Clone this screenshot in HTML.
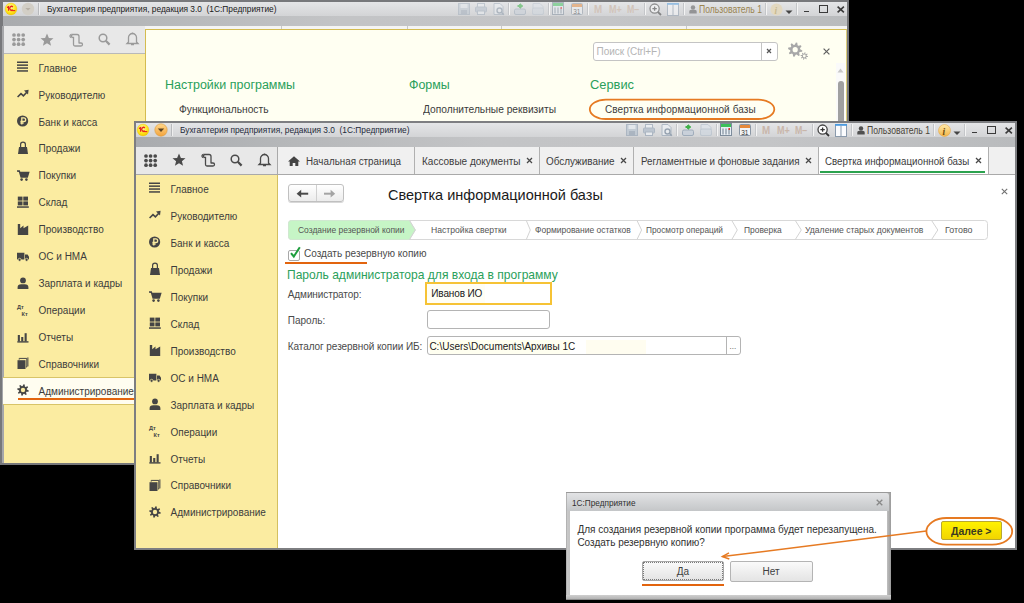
<!DOCTYPE html><html><head><meta charset="utf-8"><title>1C</title><style>*{margin:0;padding:0;box-sizing:border-box}
html,body{width:1024px;height:603px;overflow:hidden;background:#000}
body{position:relative;font-family:"Liberation Sans",sans-serif}
.a{position:absolute}
.t{white-space:nowrap}
svg.a{overflow:visible}</style></head><body><svg width="0" height="0" style="position:absolute"><defs>
<radialGradient id="g1c" cx="0.45" cy="0.35" r="0.7"><stop offset="0" stop-color="#fffbb0"/><stop offset="0.6" stop-color="#ffe61a"/><stop offset="1" stop-color="#f2c200"/></radialGradient>
<linearGradient id="gdd" x1="0" y1="0" x2="0" y2="1"><stop offset="0" stop-color="#ffd68a"/><stop offset="1" stop-color="#f4a43c"/></linearGradient>
<linearGradient id="ginfo" x1="0" y1="0" x2="0" y2="1"><stop offset="0" stop-color="#ffe9a8"/><stop offset="1" stop-color="#f3b548"/></linearGradient>
</defs></svg>
<div class="a" style="left:0px;top:0px;width:849px;height:465px;background:#77787b;"></div>
<div class="a" style="left:3px;top:2px;width:844px;height:13.5px;background:linear-gradient(#e4e5e7,#d3d4d6);"></div>
<div class="a" style="left:3px;top:15.5px;width:844px;height:10.2px;background:linear-gradient(90deg,#a9abae 0%,#b6b8ba 18%,#c3c4c6 40%,#c4c5c7 72%,#b9bbbd 100%);"></div>
<svg class="a" style="left:3.8000000000000007px;top:2px;" width="14" height="14" viewBox="0 0 14 14"><circle cx="7" cy="7" r="5.9" fill="url(#g1c)" stroke="#eec800" stroke-width="0.4"/><path d="M3 5.6l1.6-1v4.2" fill="none" stroke="#e8261c" stroke-width="1.3"/><path d="M8.9 4.9a1.9 1.9 0 1 0 0 2.8" fill="none" stroke="#e8261c" stroke-width="1.3"/><path d="M6.6 8.6h4.6" stroke="#e8261c" stroke-width="1.1"/></svg>
<svg class="a" style="left:21.1px;top:2px;" width="14" height="14" viewBox="0 0 14 14"><circle cx="7" cy="7" r="6.2" fill="#d3cfc6"/><path d="M4.3 6h5.4l-2.7 2.6z" fill="#b7b1a6"/></svg>
<div class="a" style="left:38.3px;top:3px;width:2px;height:11.5px;border-left:1px solid #b8babd;border-right:1px solid #eeeeee;"></div>
<div class="a t" style="left:47.099999999999994px;top:3.93px;font-size:9.5px;line-height:9.5px;color:#202020;transform:scaleX(0.8775);transform-origin:0 0;">Бухгалтерия предприятия, редакция 3.0&nbsp; (1С:Предприятие)</div>
<svg class="a" style="left:458px;top:3px;opacity:0.45" width="12" height="12" viewBox="0 0 12 12"><rect x="0.5" y="0.5" width="11" height="11" fill="#b8c4d0" stroke="#9aa8b8"/><rect x="2.5" y="1" width="7" height="4" fill="#e4eaf0"/><rect x="3" y="7" width="6" height="4.5" fill="#98a6b6"/></svg>
<svg class="a" style="left:475px;top:3px;opacity:0.45" width="12" height="12" viewBox="0 0 12 12"><rect x="2.5" y="0.5" width="7" height="4" fill="#eef2f6" stroke="#9aa8b8"/><rect x="0.5" y="4" width="11" height="5" rx="1" fill="#b0bccb" stroke="#9aa8b8"/><rect x="2.5" y="8" width="7" height="3.5" fill="#eef2f6" stroke="#9aa8b8"/></svg>
<svg class="a" style="left:493px;top:3px;opacity:0.45" width="12" height="12" viewBox="0 0 12 12"><path d="M1 0.5h6l3 3V11.5H1z" fill="#eef2f6" stroke="#9aa8b8"/><circle cx="6.5" cy="7.5" r="2.5" fill="none" stroke="#7d8ea0" stroke-width="1.4"/><path d="M8.3 9.3l2.5 2.5" stroke="#7d8ea0" stroke-width="1.6"/></svg>
<div class="a" style="left:508px;top:3px;width:2px;height:12px;border-left:1px solid #c4c6c9;border-right:1px solid #f4f4f4;"></div>
<svg class="a" style="left:514px;top:3px;opacity:0.5" width="12" height="12" viewBox="0 0 12 12"><rect x="0.5" y="6" width="11" height="5.5" rx="1.5" fill="#c8d0da" stroke="#9aa8b8"/><path d="M6 1v4M3.5 3h5" stroke="#2fae3a" stroke-width="1.8"/><path d="M6 0l3 3-3 3z" fill="#2fae3a"/></svg>
<svg class="a" style="left:532px;top:3px;opacity:0.45" width="12" height="12" viewBox="0 0 12 12"><path d="M1 0.5h7l3 3V11.5H1z" fill="#dde3ea" stroke="#b6c1cd"/><rect x="0.5" y="5" width="11" height="6.5" rx="1.5" fill="#cfd7e0" stroke="#b6c1cd"/></svg>
<div class="a" style="left:547.5px;top:3px;width:2px;height:12px;border-left:1px solid #c4c6c9;border-right:1px solid #f4f4f4;"></div>
<svg class="a" style="left:552px;top:2px;opacity:0.5;" width="12" height="13" viewBox="0 0 12 13"><rect x="0.5" y="0.5" width="11" height="12" fill="#e8eef4" stroke="#7d8c9c"/><rect x="1" y="1" width="10" height="3" fill="#3cc05a"/><path d="M3 5.5v6M6 5.5v6M9 5.5v6" stroke="#6d7c8c" stroke-width="1"/><rect x="8.5" y="5" width="1.5" height="2" fill="#e03030"/></svg>
<svg class="a" style="left:571px;top:2px;opacity:0.5;" width="12" height="13" viewBox="0 0 12 13"><rect x="0.5" y="1.5" width="11" height="11" rx="1" fill="#f2f4f6" stroke="#8a96a4"/><rect x="1" y="2" width="10" height="3" fill="#e6893a"/><text x="2.2" y="11.5" font-size="6.5" font-family="Liberation Sans" fill="#333">31</text></svg>
<div class="a" style="left:587px;top:3px;width:2px;height:12px;border-left:1px solid #c4c6c9;border-right:1px solid #f4f4f4;"></div>
<div class="a t" style="left:593.8px;top:5.00px;font-size:10px;line-height:10px;color:#d2c4ba;font-weight:bold;transform:scaleX(0.9828);transform-origin:0 0;">M</div>
<div class="a t" style="left:609.3px;top:5.00px;font-size:10px;line-height:10px;color:#d2c4ba;font-weight:bold;transform:scaleX(0.9032);transform-origin:0 0;">M+</div>
<div class="a t" style="left:626.8px;top:5.00px;font-size:10px;line-height:10px;color:#d2c4ba;font-weight:bold;transform:scaleX(0.8820);transform-origin:0 0;">M−</div>
<div class="a" style="left:644px;top:3px;width:2px;height:12px;border-left:1px solid #c4c6c9;border-right:1px solid #f4f4f4;"></div>
<svg class="a" style="left:649px;top:2.5px;opacity:0.5;" width="13" height="13" viewBox="0 0 13 13"><circle cx="5.6" cy="5.6" r="4.6" fill="#fff" stroke="#444" stroke-width="1.3"/><path d="M3.4 5.6h4.4M5.6 3.4v4.4" stroke="#333" stroke-width="1.3"/><path d="M8.8 8.8l3.2 3.2" stroke="#333" stroke-width="1.8"/></svg>
<svg class="a" style="left:667px;top:2.5px;opacity:0.5;" width="12" height="13" viewBox="0 0 12 13"><rect x="0.5" y="0.5" width="11" height="12" fill="#fbfcfe" stroke="#8a9aac"/><rect x="0" y="0" width="12" height="1.8" fill="#4a9ae0"/><path d="M6 1.5v11" stroke="#8a9aac"/></svg>
<div class="a" style="left:682.5px;top:3px;width:2px;height:12px;border-left:1px solid #c4c6c9;border-right:1px solid #f4f4f4;"></div>
<svg class="a" style="left:689px;top:4.5px;opacity:0.5;" width="8" height="9" viewBox="0 0 8 9"><circle cx="4" cy="2.5" r="2.2" fill="#505050"/><path d="M0.3 8.5v-1.5a2.5 2 0 0 1 2.5-2.2h2.4a2.5 2 0 0 1 2.5 2.2v1.5z" fill="#505050"/></svg>
<div class="a t" style="left:698.6px;top:4.60px;font-size:10px;line-height:10px;color:#9a8450;transform:scaleX(0.8603);transform-origin:0 0;">Пользователь 1</div>
<div class="a" style="left:765px;top:3px;width:2px;height:12px;border-left:1px solid #c4c6c9;border-right:1px solid #f4f4f4;"></div>
<svg class="a" style="left:769.5px;top:2.5px;" width="13" height="13" viewBox="0 0 13 13"><circle cx="6.5" cy="6.5" r="6" fill="#e2d8c0"/><text x="4.6" y="10.8" font-size="9.5" font-weight="bold" font-style="italic" font-family="Liberation Serif" fill="#c8b890">i</text></svg>
<svg class="a" style="left:785px;top:10px;" width="8" height="5" viewBox="0 0 8 5"><path d="M0.5 0.5h7l-3.5 3.5z" fill="#444"/></svg>
<div class="a" style="left:796px;top:3px;width:2px;height:12px;border-left:1px solid #c4c6c9;border-right:1px solid #f4f4f4;"></div>
<div class="a" style="left:803.5px;top:10.8px;width:5.5px;height:1.7px;background:#3a3a3a;"></div>
<div class="a" style="left:819px;top:5.4px;width:9px;height:8px;border:1px solid #3a3a3a;border-top-width:1.6px;"></div>
<svg class="a" style="left:836.5px;top:6px;" width="7.5" height="7" viewBox="0 0 7.5 7"><path d="M0.6 0.6l6.3 5.8M6.9 0.6L0.6 6.4" stroke="#3a3a3a" stroke-width="1.6"/></svg>
<div class="a" style="left:3px;top:25.7px;width:142px;height:28.3px;background:#e8e8e8;border-bottom:1px solid #b9b9b9;"></div>
<div class="a" style="left:145px;top:25.7px;width:702px;height:4px;background:#f4f4f4;"></div>
<div class="a" style="left:281px;top:25.7px;width:1px;height:4px;background:#c8c8c8;"></div>
<div class="a" style="left:406.5px;top:25.7px;width:1px;height:4px;background:#c8c8c8;"></div>
<div class="a" style="left:500.5px;top:25.7px;width:1px;height:4px;background:#c8c8c8;"></div>
<div class="a" style="left:685.5px;top:25.7px;width:1px;height:4px;background:#c8c8c8;"></div>
<div class="a" style="left:3px;top:54px;width:142px;height:409px;background:#fbeca1;"></div>
<div class="a" style="left:2px;top:26px;width:1.5px;height:437px;background:#a6a7aa;"></div>
<div class="a" style="left:145px;top:29.4px;width:702px;height:434px;background:#fffff2;border-left:1px solid #d4bc50;border-top:1px solid #d4bc50;border-right:1px solid #dccc78;"></div>
<svg class="a" style="left:11.5px;top:33.2px;" width="14" height="14" viewBox="0 0 14 14"><circle cx="2.0" cy="2.0" r="1.85" fill="#9a9a9a"/><circle cx="2.0" cy="6.6" r="1.85" fill="#9a9a9a"/><circle cx="2.0" cy="11.2" r="1.85" fill="#9a9a9a"/><circle cx="6.6" cy="2.0" r="1.85" fill="#9a9a9a"/><circle cx="6.6" cy="6.6" r="1.85" fill="#9a9a9a"/><circle cx="6.6" cy="11.2" r="1.85" fill="#9a9a9a"/><circle cx="11.2" cy="2.0" r="1.85" fill="#9a9a9a"/><circle cx="11.2" cy="6.6" r="1.85" fill="#9a9a9a"/><circle cx="11.2" cy="11.2" r="1.85" fill="#9a9a9a"/></svg>
<svg class="a" style="left:40px;top:32.7px;" width="14" height="14" viewBox="0 0 14 14"><path d="M7 0.5l1.9 4.4 4.6 0.3-3.6 3 1.2 4.6L7 10.3l-4.1 2.5 1.2-4.6-3.6-3 4.6-0.3z" fill="#9a9a9a"/></svg>
<svg class="a" style="left:68.5px;top:32.7px;" width="14" height="14" viewBox="0 0 14 14"><path d="M2.5 1.5h5.5a2 2 0 0 1 2 2V10.5M4 1.5a1.5 1.5 0 0 0 0 3h0.5v7a1.5 1.5 0 0 0 1.5 1.5h6a1.5 1.5 0 0 0 0-3h-2" fill="none" stroke="#9a9a9a" stroke-width="1.3"/><path d="M2.5 1.5a1.5 1.5 0 0 0 0 3" fill="none" stroke="#9a9a9a" stroke-width="1.3"/></svg>
<svg class="a" style="left:97.5px;top:33.2px;" width="13" height="13" viewBox="0 0 13 13"><circle cx="5" cy="5" r="3.8" fill="none" stroke="#9a9a9a" stroke-width="1.5"/><path d="M7.8 7.8l3.8 3.8" stroke="#9a9a9a" stroke-width="2.2"/></svg>
<svg class="a" style="left:125.5px;top:32.2px;" width="13" height="14" viewBox="0 0 13 14"><path d="M6.5 1.5a4 4 0 0 0-4 4V10L1 11.5h11L10.5 10V5.5a4 4 0 0 0-4-4z" fill="none" stroke="#9a9a9a" stroke-width="1.3"/><circle cx="6.5" cy="1.3" r="0.9" fill="#9a9a9a"/><path d="M5 12.5h3" stroke="#9a9a9a" stroke-width="1.5"/></svg>
<div class="a" style="left:3px;top:377.3px;width:142px;height:28px;background:#fffdf0;border-top:1px solid #d8c468;border-bottom:1px solid #d8c468;"></div>
<svg class="a" style="left:16.599999999999994px;top:60.99999999999999px;" width="12" height="12" viewBox="0 0 12 12"><rect x="0" y="0.5" width="11" height="1.5" fill="#454545"/><rect x="0" y="3.4" width="11" height="1.5" fill="#454545"/><rect x="0" y="6.3" width="11" height="1.5" fill="#454545"/><rect x="0" y="9.2" width="11" height="1.5" fill="#454545"/></svg>
<div class="a t" style="left:38.5px;top:63.60px;font-size:10px;line-height:10px;color:#3c3c3c;">Главное</div>
<svg class="a" style="left:16.599999999999994px;top:87.94999999999999px;" width="12" height="12" viewBox="0 0 12 12"><polyline points="0.6,9 4,5.6 6.4,7.8 9.8,4.2" fill="none" stroke="#454545" stroke-width="1.6"/><polygon points="7,2.6 11.6,1.8 11,6.4" fill="#454545"/></svg>
<div class="a t" style="left:38.5px;top:90.55px;font-size:10px;line-height:10px;color:#3c3c3c;">Руководителю</div>
<svg class="a" style="left:16.599999999999994px;top:114.9px;" width="12" height="12" viewBox="0 0 12 12"><circle cx="5.6" cy="6" r="5.6" fill="#454545"/><path d="M4.8 9.6V2.8h2a1.8 1.8 0 0 1 0 3.7H3.4M3.4 8.2H6.6" fill="none" stroke="#fbeca1" stroke-width="1.3"/></svg>
<div class="a t" style="left:38.5px;top:117.50px;font-size:10px;line-height:10px;color:#3c3c3c;">Банк и касса</div>
<svg class="a" style="left:16.599999999999994px;top:141.85000000000002px;" width="12" height="12" viewBox="0 0 12 12"><path d="M2 5h8l1 7H1z" fill="#454545"/><path d="M3.6 6V2.4a2.4 2.2 0 0 1 4.8 0V6" fill="none" stroke="#454545" stroke-width="1.2"/></svg>
<div class="a t" style="left:38.5px;top:144.45px;font-size:10px;line-height:10px;color:#3c3c3c;">Продажи</div>
<svg class="a" style="left:16.599999999999994px;top:168.8px;" width="12" height="12" viewBox="0 0 12 12"><path d="M0 2h2.3l1.8 6h6.2l1.4-4.5H3" fill="#454545" stroke="#454545" stroke-width="1.4"/><circle cx="4.6" cy="10.6" r="1.3" fill="#454545"/><circle cx="9.4" cy="10.6" r="1.3" fill="#454545"/></svg>
<div class="a t" style="left:38.5px;top:171.40px;font-size:10px;line-height:10px;color:#3c3c3c;">Покупки</div>
<svg class="a" style="left:16.599999999999994px;top:195.75px;" width="12" height="12" viewBox="0 0 12 12"><rect x="0.8" y="0.6" width="4.7" height="4" fill="#454545"/><rect x="6.3" y="0.6" width="4.7" height="4" fill="#454545"/><rect x="0.8" y="5.4" width="4.7" height="4" fill="#454545"/><rect x="6.3" y="5.4" width="4.7" height="4" fill="#454545"/><rect x="0" y="10.3" width="11.8" height="1.5" fill="#454545"/></svg>
<div class="a t" style="left:38.5px;top:198.35px;font-size:10px;line-height:10px;color:#3c3c3c;">Склад</div>
<svg class="a" style="left:16.599999999999994px;top:222.7px;" width="12" height="12" viewBox="0 0 12 12"><path d="M0.8 12V1h2.4v4.2l3.3-2.6v2.6l4.7-2.6V12z" fill="#454545"/></svg>
<div class="a t" style="left:38.5px;top:225.30px;font-size:10px;line-height:10px;color:#3c3c3c;">Производство</div>
<svg class="a" style="left:16.599999999999994px;top:249.65px;" width="12" height="12" viewBox="0 0 12 12"><path d="M0 2.8h7.4v6.6H0zM8 4.6h2.6l1.4 2.2v2.6H8z" fill="#454545"/><circle cx="2.6" cy="9.8" r="1.5" fill="#454545" stroke="#fbeca1" stroke-width="0.7"/><circle cx="9.6" cy="9.8" r="1.5" fill="#454545" stroke="#fbeca1" stroke-width="0.7"/></svg>
<div class="a t" style="left:38.5px;top:252.25px;font-size:10px;line-height:10px;color:#3c3c3c;">ОС и НМА</div>
<svg class="a" style="left:16.599999999999994px;top:276.6px;" width="12" height="12" viewBox="0 0 12 12"><circle cx="6" cy="3.4" r="2.9" fill="#454545"/><path d="M0.6 12v-1.8a3.6 3 0 0 1 3.6-3h3.6a3.6 3 0 0 1 3.6 3V12z" fill="#454545"/></svg>
<div class="a t" style="left:38.5px;top:279.20px;font-size:10px;line-height:10px;color:#3c3c3c;">Зарплата и кадры</div>
<svg class="a" style="left:16.599999999999994px;top:303.54999999999995px;" width="12" height="12" viewBox="0 0 12 12"><text x="0" y="5" font-size="5.6" font-family="Liberation Sans" font-weight="bold" fill="#454545">Дт</text><text x="4.6" y="11.6" font-size="5.6" font-family="Liberation Sans" font-weight="bold" fill="#454545">Кт</text></svg>
<div class="a t" style="left:38.5px;top:306.15px;font-size:10px;line-height:10px;color:#3c3c3c;">Операции</div>
<svg class="a" style="left:16.599999999999994px;top:330.5px;" width="12" height="12" viewBox="0 0 12 12"><rect x="0.3" y="10.2" width="11.2" height="1.4" fill="#454545"/><rect x="0.8" y="4" width="2.1" height="6.5" fill="#454545"/><rect x="4.2" y="6" width="2.1" height="4.5" fill="#454545"/><rect x="7.6" y="2.2" width="2.1" height="8.3" fill="#454545"/></svg>
<div class="a t" style="left:38.5px;top:333.10px;font-size:10px;line-height:10px;color:#3c3c3c;">Отчеты</div>
<svg class="a" style="left:16.599999999999994px;top:357.44999999999993px;" width="12" height="12" viewBox="0 0 12 12"><rect x="0.5" y="3.2" width="8" height="8.8" fill="#454545"/><path d="M2.2 2.6V1.4h7.6v8.6H8.9M10.9 0.4v9" fill="none" stroke="#454545" stroke-width="1"/></svg>
<div class="a t" style="left:38.5px;top:360.05px;font-size:10px;line-height:10px;color:#3c3c3c;">Справочники</div>
<svg class="a" style="left:16.599999999999994px;top:384.4px;" width="12" height="12" viewBox="0 0 12 12"><polygon points="11.77,6.57 11.55,7.68 9.48,7.86 9.05,8.50 9.68,10.48 8.73,11.12 7.14,9.77 6.39,9.93 5.43,11.77 4.32,11.55 4.14,9.48 3.50,9.05 1.52,9.68 0.88,8.73 2.23,7.14 2.07,6.39 0.23,5.43 0.45,4.32 2.52,4.14 2.95,3.50 2.32,1.52 3.27,0.88 4.86,2.23 5.61,2.07 6.57,0.23 7.68,0.45 7.86,2.52 8.50,2.95 10.48,2.32 11.12,3.27 9.77,4.86 9.93,5.61" fill="#454545"/><circle cx="6" cy="6" r="2.2" fill="#fbeca1"/></svg>
<div class="a t" style="left:38.5px;top:387.00px;font-size:10px;line-height:10px;color:#3c3c3c;">Администрирование</div>
<div class="a" style="left:17.7px;top:397.5px;width:116px;height:2.2px;background:#e2640e;"></div>
<div class="a t" style="left:165px;top:79.38px;font-size:12.5px;line-height:12.5px;color:#2aa05a;transform:scaleX(0.9994);transform-origin:0 0;">Настройки программы</div>
<div class="a t" style="left:408.6px;top:79.26px;font-size:12.4px;line-height:12.4px;color:#2aa05a;transform:scaleX(1.0039);transform-origin:0 0;">Формы</div>
<div class="a t" style="left:590px;top:78.92px;font-size:12.8px;line-height:12.8px;color:#2aa05a;transform:scaleX(1.0039);transform-origin:0 0;">Сервис</div>
<div class="a t" style="left:178.6px;top:104.70px;font-size:10px;line-height:10px;color:#3c3c3c;transform:scaleX(1.0241);transform-origin:0 0;">Функциональность</div>
<div class="a t" style="left:422.6px;top:104.70px;font-size:10px;line-height:10px;color:#3c3c3c;transform:scaleX(1.0209);transform-origin:0 0;">Дополнительные реквизиты</div>
<div class="a t" style="left:605px;top:104.70px;font-size:10px;line-height:10px;color:#3c3c3c;letter-spacing:0.09px;">Свертка информационной базы</div>
<svg class="a" style="left:587px;top:97px;" width="190" height="24" viewBox="0 0 190 24"><rect x="2.8" y="2.7" width="184.5" height="19.3" rx="16" ry="9.65" fill="none" stroke="#e67a22" stroke-width="1.8"/></svg>
<div class="a" style="left:593px;top:42px;width:185px;height:19px;background:#fff;border:1px solid #c4c4c4;border-radius:3px;"></div>
<div class="a" style="left:761px;top:43px;width:1px;height:17px;background:#c4c4c4;"></div>
<div class="a t" style="left:596.5px;top:47.30px;font-size:10px;line-height:10px;color:#b4b4b4;letter-spacing:-0.05px;">Поиск (Ctrl+F)</div>
<svg class="a" style="left:766px;top:48px;" width="6" height="6" viewBox="0 0 6 6"><path d="M1 1l4 4M5 1l-4 4" stroke="#555" stroke-width="1.2"/></svg>
<svg class="a" style="left:786px;top:41px;" width="24" height="20" viewBox="0 0 24 20"><polygon points="16.37,9.41 16.09,10.79 13.64,11.08 13.10,11.90 13.77,14.27 12.59,15.05 10.66,13.52 9.69,13.72 8.49,15.87 7.11,15.59 6.82,13.14 6.00,12.60 3.63,13.27 2.85,12.09 4.38,10.16 4.18,9.19 2.03,7.99 2.31,6.61 4.76,6.32 5.30,5.50 4.63,3.13 5.81,2.35 7.74,3.88 8.71,3.68 9.91,1.53 11.29,1.81 11.58,4.26 12.40,4.80 14.77,4.13 15.55,5.31 14.02,7.24 14.22,8.21" fill="#a8a8a8"/><circle cx="9.2" cy="8.7" r="2.6" fill="#fffff2"/><polygon points="22.08,15.37 21.94,16.10 20.38,16.11 20.12,16.49 20.71,17.94 20.09,18.35 18.98,17.25 18.53,17.34 17.93,18.78 17.20,18.64 17.19,17.08 16.81,16.82 15.36,17.41 14.95,16.79 16.05,15.68 15.96,15.23 14.52,14.63 14.66,13.90 16.22,13.89 16.48,13.51 15.89,12.06 16.51,11.65 17.62,12.75 18.07,12.66 18.67,11.22 19.40,11.36 19.41,12.92 19.79,13.18 21.24,12.59 21.65,13.21 20.55,14.32 20.64,14.77" fill="#a8a8a8"/><circle cx="18.3" cy="15" r="1.4" fill="#fffff2"/></svg>
<svg class="a" style="left:822.5px;top:48px;" width="7" height="7" viewBox="0 0 7 7"><path d="M0.6 0.6l5.8 5.8M6.4 0.6l-5.8 5.8" stroke="#606060" stroke-width="1.2"/></svg>
<div class="a" style="left:836px;top:63px;width:9px;height:400px;background:#fafafa;"></div>
<svg class="a" style="left:837px;top:68px;" width="7" height="5" viewBox="0 0 7 5"><path d="M0.5 4.5l3-4 3 4z" fill="#c8c8c8"/></svg>
<div class="a" style="left:838.4px;top:81px;width:5.6px;height:400px;background:#a0a0a0;border-radius:3px 3px 0 0;"></div>
<div class="a" style="left:134px;top:121px;width:883px;height:429px;background:#7d7e81;"></div>
<div class="a" style="left:136px;top:123px;width:879px;height:13.5px;background:linear-gradient(#e4e5e7,#d3d4d6);"></div>
<div class="a" style="left:136px;top:136.5px;width:879px;height:10.2px;background:linear-gradient(90deg,#a9abae 0%,#b6b8ba 18%,#c3c4c6 40%,#c4c5c7 72%,#b9bbbd 100%);"></div>
<svg class="a" style="left:136.3px;top:123px;" width="14" height="14" viewBox="0 0 14 14"><circle cx="7" cy="7" r="5.9" fill="url(#g1c)" stroke="#eec800" stroke-width="0.4"/><path d="M3 5.6l1.6-1v4.2" fill="none" stroke="#e8261c" stroke-width="1.3"/><path d="M8.9 4.9a1.9 1.9 0 1 0 0 2.8" fill="none" stroke="#e8261c" stroke-width="1.3"/><path d="M6.6 8.6h4.6" stroke="#e8261c" stroke-width="1.1"/></svg>
<svg class="a" style="left:153.60000000000002px;top:123px;" width="14" height="14" viewBox="0 0 14 14"><circle cx="7" cy="7" r="6.2" fill="url(#gdd)" stroke="#d99a40" stroke-width="0.6"/><path d="M3.8 5.6h6.4l-3.2 3.4z" fill="#5c4424"/></svg>
<div class="a" style="left:170.8px;top:124px;width:2px;height:11.5px;border-left:1px solid #b8babd;border-right:1px solid #eeeeee;"></div>
<div class="a t" style="left:179.60000000000002px;top:124.92px;font-size:9.5px;line-height:9.5px;color:#1e2a3a;transform:scaleX(0.8775);transform-origin:0 0;">Бухгалтерия предприятия, редакция 3.0&nbsp; (1С:Предприятие)</div>
<svg class="a" style="left:626px;top:124px;opacity:0.7" width="12" height="12" viewBox="0 0 12 12"><rect x="0.5" y="0.5" width="11" height="11" fill="#b8c4d0" stroke="#9aa8b8"/><rect x="2.5" y="1" width="7" height="4" fill="#e4eaf0"/><rect x="3" y="7" width="6" height="4.5" fill="#98a6b6"/></svg>
<svg class="a" style="left:643px;top:124px;opacity:0.7" width="12" height="12" viewBox="0 0 12 12"><rect x="2.5" y="0.5" width="7" height="4" fill="#eef2f6" stroke="#9aa8b8"/><rect x="0.5" y="4" width="11" height="5" rx="1" fill="#b0bccb" stroke="#9aa8b8"/><rect x="2.5" y="8" width="7" height="3.5" fill="#eef2f6" stroke="#9aa8b8"/></svg>
<svg class="a" style="left:661px;top:124px;opacity:0.7" width="12" height="12" viewBox="0 0 12 12"><path d="M1 0.5h6l3 3V11.5H1z" fill="#eef2f6" stroke="#9aa8b8"/><circle cx="6.5" cy="7.5" r="2.5" fill="none" stroke="#7d8ea0" stroke-width="1.4"/><path d="M8.3 9.3l2.5 2.5" stroke="#7d8ea0" stroke-width="1.6"/></svg>
<div class="a" style="left:676px;top:124px;width:2px;height:12px;border-left:1px solid #c4c6c9;border-right:1px solid #f4f4f4;"></div>
<svg class="a" style="left:682px;top:124px;opacity:0.9" width="12" height="12" viewBox="0 0 12 12"><rect x="0.5" y="6" width="11" height="5.5" rx="1.5" fill="#c8d0da" stroke="#9aa8b8"/><path d="M6 1v4M3.5 3h5" stroke="#2fae3a" stroke-width="1.8"/><path d="M6 0l3 3-3 3z" fill="#2fae3a"/></svg>
<svg class="a" style="left:700px;top:124px;opacity:0.7" width="12" height="12" viewBox="0 0 12 12"><path d="M1 0.5h7l3 3V11.5H1z" fill="#dde3ea" stroke="#b6c1cd"/><rect x="0.5" y="5" width="11" height="6.5" rx="1.5" fill="#cfd7e0" stroke="#b6c1cd"/></svg>
<div class="a" style="left:715.5px;top:124px;width:2px;height:12px;border-left:1px solid #c4c6c9;border-right:1px solid #f4f4f4;"></div>
<svg class="a" style="left:720px;top:123px;" width="12" height="13" viewBox="0 0 12 13"><rect x="0.5" y="0.5" width="11" height="12" fill="#e8eef4" stroke="#7d8c9c"/><rect x="1" y="1" width="10" height="3" fill="#3cc05a"/><path d="M3 5.5v6M6 5.5v6M9 5.5v6" stroke="#6d7c8c" stroke-width="1"/><rect x="8.5" y="5" width="1.5" height="2" fill="#e03030"/></svg>
<svg class="a" style="left:739px;top:123px;" width="12" height="13" viewBox="0 0 12 13"><rect x="0.5" y="1.5" width="11" height="11" rx="1" fill="#f2f4f6" stroke="#8a96a4"/><rect x="1" y="2" width="10" height="3" fill="#e6893a"/><text x="2.2" y="11.5" font-size="6.5" font-family="Liberation Sans" fill="#333">31</text></svg>
<div class="a" style="left:755px;top:124px;width:2px;height:12px;border-left:1px solid #c4c6c9;border-right:1px solid #f4f4f4;"></div>
<div class="a t" style="left:761.8px;top:126.00px;font-size:10px;line-height:10px;color:#c9b6aa;font-weight:bold;transform:scaleX(0.9828);transform-origin:0 0;">M</div>
<div class="a t" style="left:777.3px;top:126.00px;font-size:10px;line-height:10px;color:#c9b6aa;font-weight:bold;transform:scaleX(0.9032);transform-origin:0 0;">M+</div>
<div class="a t" style="left:794.8px;top:126.00px;font-size:10px;line-height:10px;color:#c9b6aa;font-weight:bold;transform:scaleX(0.8820);transform-origin:0 0;">M−</div>
<div class="a" style="left:812px;top:124px;width:2px;height:12px;border-left:1px solid #c4c6c9;border-right:1px solid #f4f4f4;"></div>
<svg class="a" style="left:817px;top:123.5px;" width="13" height="13" viewBox="0 0 13 13"><circle cx="5.6" cy="5.6" r="4.6" fill="#fff" stroke="#444" stroke-width="1.3"/><path d="M3.4 5.6h4.4M5.6 3.4v4.4" stroke="#333" stroke-width="1.3"/><path d="M8.8 8.8l3.2 3.2" stroke="#333" stroke-width="1.8"/></svg>
<svg class="a" style="left:835px;top:123.5px;" width="12" height="13" viewBox="0 0 12 13"><rect x="0.5" y="0.5" width="11" height="12" fill="#fbfcfe" stroke="#8a9aac"/><rect x="0" y="0" width="12" height="1.8" fill="#4a9ae0"/><path d="M6 1.5v11" stroke="#8a9aac"/></svg>
<div class="a" style="left:850.5px;top:124px;width:2px;height:12px;border-left:1px solid #c4c6c9;border-right:1px solid #f4f4f4;"></div>
<svg class="a" style="left:857px;top:125.5px;" width="8" height="9" viewBox="0 0 8 9"><circle cx="4" cy="2.5" r="2.2" fill="#505050"/><path d="M0.3 8.5v-1.5a2.5 2 0 0 1 2.5-2.2h2.4a2.5 2 0 0 1 2.5 2.2v1.5z" fill="#505050"/></svg>
<div class="a t" style="left:866.6px;top:125.60px;font-size:10px;line-height:10px;color:#4a4438;transform:scaleX(0.8603);transform-origin:0 0;">Пользователь 1</div>
<div class="a" style="left:933px;top:124px;width:2px;height:12px;border-left:1px solid #c4c6c9;border-right:1px solid #f4f4f4;"></div>
<svg class="a" style="left:937.5px;top:123.5px;" width="13" height="13" viewBox="0 0 13 13"><circle cx="6.5" cy="6.5" r="6" fill="url(#ginfo)" stroke="#e0a040" stroke-width="0.5"/><text x="4.6" y="10.8" font-size="9.5" font-weight="bold" font-style="italic" font-family="Liberation Serif" fill="#6a4a10">i</text></svg>
<svg class="a" style="left:953px;top:131px;" width="8" height="5" viewBox="0 0 8 5"><path d="M0.5 0.5h7l-3.5 3.5z" fill="#444"/></svg>
<div class="a" style="left:964px;top:124px;width:2px;height:12px;border-left:1px solid #c4c6c9;border-right:1px solid #f4f4f4;"></div>
<div class="a" style="left:971.5px;top:131.8px;width:5.5px;height:1.7px;background:#3a3a3a;"></div>
<div class="a" style="left:987px;top:126.4px;width:9px;height:8px;border:1px solid #3a3a3a;border-top-width:1.6px;"></div>
<svg class="a" style="left:1004.5px;top:127px;" width="7.5" height="7" viewBox="0 0 7.5 7"><path d="M0.6 0.6l6.3 5.8M6.9 0.6L0.6 6.4" stroke="#3a3a3a" stroke-width="1.6"/></svg>
<div class="a" style="left:136px;top:146.5px;width:141.5px;height:28.5px;background:#e8e8e8;border-bottom:1px solid #a9a9a9;border-right:1px solid #a9a9a9;"></div>
<div class="a" style="left:277.5px;top:146.5px;width:737.5px;height:28.5px;background:#f0f0f0;border-bottom:1px solid #a9a9a9;"></div>
<svg class="a" style="left:143.5px;top:153.5px;" width="14" height="14" viewBox="0 0 14 14"><circle cx="2.0" cy="2.0" r="1.85" fill="#4a4a4a"/><circle cx="2.0" cy="6.6" r="1.85" fill="#4a4a4a"/><circle cx="2.0" cy="11.2" r="1.85" fill="#4a4a4a"/><circle cx="6.6" cy="2.0" r="1.85" fill="#4a4a4a"/><circle cx="6.6" cy="6.6" r="1.85" fill="#4a4a4a"/><circle cx="6.6" cy="11.2" r="1.85" fill="#4a4a4a"/><circle cx="11.2" cy="2.0" r="1.85" fill="#4a4a4a"/><circle cx="11.2" cy="6.6" r="1.85" fill="#4a4a4a"/><circle cx="11.2" cy="11.2" r="1.85" fill="#4a4a4a"/></svg>
<svg class="a" style="left:172px;top:153px;" width="14" height="14" viewBox="0 0 14 14"><path d="M7 0.5l1.9 4.4 4.6 0.3-3.6 3 1.2 4.6L7 10.3l-4.1 2.5 1.2-4.6-3.6-3 4.6-0.3z" fill="#4a4a4a"/></svg>
<svg class="a" style="left:200.5px;top:153px;" width="14" height="14" viewBox="0 0 14 14"><path d="M2.5 1.5h5.5a2 2 0 0 1 2 2V10.5M4 1.5a1.5 1.5 0 0 0 0 3h0.5v7a1.5 1.5 0 0 0 1.5 1.5h6a1.5 1.5 0 0 0 0-3h-2" fill="none" stroke="#4a4a4a" stroke-width="1.3"/><path d="M2.5 1.5a1.5 1.5 0 0 0 0 3" fill="none" stroke="#4a4a4a" stroke-width="1.3"/></svg>
<svg class="a" style="left:229.5px;top:153.5px;" width="13" height="13" viewBox="0 0 13 13"><circle cx="5" cy="5" r="3.8" fill="none" stroke="#4a4a4a" stroke-width="1.5"/><path d="M7.8 7.8l3.8 3.8" stroke="#4a4a4a" stroke-width="2.2"/></svg>
<svg class="a" style="left:257.5px;top:152.5px;" width="13" height="14" viewBox="0 0 13 14"><path d="M6.5 1.5a4 4 0 0 0-4 4V10L1 11.5h11L10.5 10V5.5a4 4 0 0 0-4-4z" fill="none" stroke="#4a4a4a" stroke-width="1.3"/><circle cx="6.5" cy="1.3" r="0.9" fill="#4a4a4a"/><path d="M5 12.5h3" stroke="#4a4a4a" stroke-width="1.5"/></svg>
<div class="a" style="left:136px;top:175px;width:141.5px;height:373px;background:#fbeca1;border-right:1px solid #d4c060;"></div>
<svg class="a" style="left:148.6px;top:182.4px;" width="12" height="12" viewBox="0 0 12 12"><rect x="0" y="0.5" width="11" height="1.5" fill="#454545"/><rect x="0" y="3.4" width="11" height="1.5" fill="#454545"/><rect x="0" y="6.3" width="11" height="1.5" fill="#454545"/><rect x="0" y="9.2" width="11" height="1.5" fill="#454545"/></svg>
<div class="a t" style="left:170.5px;top:185.00px;font-size:10px;line-height:10px;color:#3c3c3c;">Главное</div>
<svg class="a" style="left:148.6px;top:209.35px;" width="12" height="12" viewBox="0 0 12 12"><polyline points="0.6,9 4,5.6 6.4,7.8 9.8,4.2" fill="none" stroke="#454545" stroke-width="1.6"/><polygon points="7,2.6 11.6,1.8 11,6.4" fill="#454545"/></svg>
<div class="a t" style="left:170.5px;top:211.95px;font-size:10px;line-height:10px;color:#3c3c3c;">Руководителю</div>
<svg class="a" style="left:148.6px;top:236.3px;" width="12" height="12" viewBox="0 0 12 12"><circle cx="5.6" cy="6" r="5.6" fill="#454545"/><path d="M4.8 9.6V2.8h2a1.8 1.8 0 0 1 0 3.7H3.4M3.4 8.2H6.6" fill="none" stroke="#fbeca1" stroke-width="1.3"/></svg>
<div class="a t" style="left:170.5px;top:238.90px;font-size:10px;line-height:10px;color:#3c3c3c;">Банк и касса</div>
<svg class="a" style="left:148.6px;top:263.25px;" width="12" height="12" viewBox="0 0 12 12"><path d="M2 5h8l1 7H1z" fill="#454545"/><path d="M3.6 6V2.4a2.4 2.2 0 0 1 4.8 0V6" fill="none" stroke="#454545" stroke-width="1.2"/></svg>
<div class="a t" style="left:170.5px;top:265.85px;font-size:10px;line-height:10px;color:#3c3c3c;">Продажи</div>
<svg class="a" style="left:148.6px;top:290.2px;" width="12" height="12" viewBox="0 0 12 12"><path d="M0 2h2.3l1.8 6h6.2l1.4-4.5H3" fill="#454545" stroke="#454545" stroke-width="1.4"/><circle cx="4.6" cy="10.6" r="1.3" fill="#454545"/><circle cx="9.4" cy="10.6" r="1.3" fill="#454545"/></svg>
<div class="a t" style="left:170.5px;top:292.80px;font-size:10px;line-height:10px;color:#3c3c3c;">Покупки</div>
<svg class="a" style="left:148.6px;top:317.15px;" width="12" height="12" viewBox="0 0 12 12"><rect x="0.8" y="0.6" width="4.7" height="4" fill="#454545"/><rect x="6.3" y="0.6" width="4.7" height="4" fill="#454545"/><rect x="0.8" y="5.4" width="4.7" height="4" fill="#454545"/><rect x="6.3" y="5.4" width="4.7" height="4" fill="#454545"/><rect x="0" y="10.3" width="11.8" height="1.5" fill="#454545"/></svg>
<div class="a t" style="left:170.5px;top:319.75px;font-size:10px;line-height:10px;color:#3c3c3c;">Склад</div>
<svg class="a" style="left:148.6px;top:344.09999999999997px;" width="12" height="12" viewBox="0 0 12 12"><path d="M0.8 12V1h2.4v4.2l3.3-2.6v2.6l4.7-2.6V12z" fill="#454545"/></svg>
<div class="a t" style="left:170.5px;top:346.70px;font-size:10px;line-height:10px;color:#3c3c3c;">Производство</div>
<svg class="a" style="left:148.6px;top:371.04999999999995px;" width="12" height="12" viewBox="0 0 12 12"><path d="M0 2.8h7.4v6.6H0zM8 4.6h2.6l1.4 2.2v2.6H8z" fill="#454545"/><circle cx="2.6" cy="9.8" r="1.5" fill="#454545" stroke="#fbeca1" stroke-width="0.7"/><circle cx="9.6" cy="9.8" r="1.5" fill="#454545" stroke="#fbeca1" stroke-width="0.7"/></svg>
<div class="a t" style="left:170.5px;top:373.65px;font-size:10px;line-height:10px;color:#3c3c3c;">ОС и НМА</div>
<svg class="a" style="left:148.6px;top:398.0px;" width="12" height="12" viewBox="0 0 12 12"><circle cx="6" cy="3.4" r="2.9" fill="#454545"/><path d="M0.6 12v-1.8a3.6 3 0 0 1 3.6-3h3.6a3.6 3 0 0 1 3.6 3V12z" fill="#454545"/></svg>
<div class="a t" style="left:170.5px;top:400.60px;font-size:10px;line-height:10px;color:#3c3c3c;">Зарплата и кадры</div>
<svg class="a" style="left:148.6px;top:424.94999999999993px;" width="12" height="12" viewBox="0 0 12 12"><text x="0" y="5" font-size="5.6" font-family="Liberation Sans" font-weight="bold" fill="#454545">Дт</text><text x="4.6" y="11.6" font-size="5.6" font-family="Liberation Sans" font-weight="bold" fill="#454545">Кт</text></svg>
<div class="a t" style="left:170.5px;top:427.55px;font-size:10px;line-height:10px;color:#3c3c3c;">Операции</div>
<svg class="a" style="left:148.6px;top:451.9px;" width="12" height="12" viewBox="0 0 12 12"><rect x="0.3" y="10.2" width="11.2" height="1.4" fill="#454545"/><rect x="0.8" y="4" width="2.1" height="6.5" fill="#454545"/><rect x="4.2" y="6" width="2.1" height="4.5" fill="#454545"/><rect x="7.6" y="2.2" width="2.1" height="8.3" fill="#454545"/></svg>
<div class="a t" style="left:170.5px;top:454.50px;font-size:10px;line-height:10px;color:#3c3c3c;">Отчеты</div>
<svg class="a" style="left:148.6px;top:478.84999999999997px;" width="12" height="12" viewBox="0 0 12 12"><rect x="0.5" y="3.2" width="8" height="8.8" fill="#454545"/><path d="M2.2 2.6V1.4h7.6v8.6H8.9M10.9 0.4v9" fill="none" stroke="#454545" stroke-width="1"/></svg>
<div class="a t" style="left:170.5px;top:481.45px;font-size:10px;line-height:10px;color:#3c3c3c;">Справочники</div>
<svg class="a" style="left:148.6px;top:505.79999999999995px;" width="12" height="12" viewBox="0 0 12 12"><polygon points="11.77,6.57 11.55,7.68 9.48,7.86 9.05,8.50 9.68,10.48 8.73,11.12 7.14,9.77 6.39,9.93 5.43,11.77 4.32,11.55 4.14,9.48 3.50,9.05 1.52,9.68 0.88,8.73 2.23,7.14 2.07,6.39 0.23,5.43 0.45,4.32 2.52,4.14 2.95,3.50 2.32,1.52 3.27,0.88 4.86,2.23 5.61,2.07 6.57,0.23 7.68,0.45 7.86,2.52 8.50,2.95 10.48,2.32 11.12,3.27 9.77,4.86 9.93,5.61" fill="#454545"/><circle cx="6" cy="6" r="2.2" fill="#fbeca1"/></svg>
<div class="a t" style="left:170.5px;top:508.40px;font-size:10px;line-height:10px;color:#3c3c3c;">Администрирование</div>
<div class="a" style="left:278px;top:175px;width:737px;height:373px;background:#fff;"></div>
<div class="a" style="left:414px;top:146.5px;width:1px;height:27.5px;background:#b0b0b0;"></div>
<div class="a" style="left:538.5px;top:146.5px;width:1px;height:27.5px;background:#b0b0b0;"></div>
<div class="a" style="left:633px;top:146.5px;width:1px;height:27.5px;background:#b0b0b0;"></div>
<div class="a" style="left:817.6px;top:146.5px;width:1px;height:27.5px;background:#b0b0b0;"></div>
<div class="a" style="left:987.6px;top:146.5px;width:1px;height:27.5px;background:#b0b0b0;"></div>
<div class="a" style="left:818.6px;top:146.5px;width:169px;height:27px;background:#fff;"></div>
<div class="a" style="left:820.4px;top:170.5px;width:164.2px;height:2px;background:#2ba24e;"></div>
<svg class="a" style="left:287.5px;top:155.5px;" width="12" height="10" viewBox="0 0 12 10"><path d="M6 0.3L0 5.6h1.7V10h3V7h2.6v3h3V5.6H12z" fill="#444"/></svg>
<div class="a t" style="left:306px;top:156.90px;font-size:10px;line-height:10px;color:#3c3c3c;transform:scaleX(0.9818);transform-origin:0 0;">Начальная страница</div>
<div class="a t" style="left:421.6px;top:156.90px;font-size:10px;line-height:10px;color:#3c3c3c;transform:scaleX(1.0010);transform-origin:0 0;">Кассовые документы</div>
<div class="a t" style="left:545.8px;top:156.90px;font-size:10px;line-height:10px;color:#3c3c3c;transform:scaleX(0.9919);transform-origin:0 0;">Обслуживание</div>
<div class="a t" style="left:640.5px;top:156.90px;font-size:10px;line-height:10px;color:#3c3c3c;transform:scaleX(0.9762);transform-origin:0 0;">Регламентные и фоновые задания</div>
<div class="a t" style="left:825px;top:156.90px;font-size:10px;line-height:10px;color:#3c3c3c;transform:scaleX(0.9729);transform-origin:0 0;">Свертка информационной базы</div>
<svg class="a" style="left:525.5px;top:156.8px;" width="7" height="7" viewBox="0 0 7 7"><path d="M1 1l5 5M6 1l-5 5" stroke="#484848" stroke-width="1.25"/></svg>
<svg class="a" style="left:620.0px;top:156.8px;" width="7" height="7" viewBox="0 0 7 7"><path d="M1 1l5 5M6 1l-5 5" stroke="#484848" stroke-width="1.25"/></svg>
<svg class="a" style="left:804.5px;top:156.8px;" width="7" height="7" viewBox="0 0 7 7"><path d="M1 1l5 5M6 1l-5 5" stroke="#484848" stroke-width="1.25"/></svg>
<svg class="a" style="left:974.9px;top:156.8px;" width="7" height="7" viewBox="0 0 7 7"><path d="M1 1l5 5M6 1l-5 5" stroke="#484848" stroke-width="1.25"/></svg>
<div class="a" style="left:287.7px;top:184.4px;width:56.3px;height:18px;background:linear-gradient(#ffffff,#ececec);border:1px solid #c0c0c0;border-radius:3px;box-shadow:0 1px 0 #d8d8d8;"></div>
<div class="a" style="left:316px;top:185.4px;width:1px;height:16px;background:#d0d0d0;"></div>
<svg class="a" style="left:296px;top:189px;" width="13" height="10" viewBox="0 0 13 10"><path d="M4 4.7h8.2" stroke="#4a4a4a" stroke-width="2"/><path d="M0.6 4.7L5.2 0.8V8.6z" fill="#4a4a4a"/></svg>
<svg class="a" style="left:324px;top:189px;" width="12" height="10" viewBox="0 0 12 10"><path d="M0 4.7h8" stroke="#a4a4a4" stroke-width="2"/><path d="M11.2 4.7L6.6 0.8V8.6z" fill="#a4a4a4"/></svg>
<div class="a t" style="left:388.3px;top:187.25px;font-size:15px;line-height:15px;color:#1a1a1a;transform:scaleX(0.9656);transform-origin:0 0;">Свертка информационной базы</div>
<svg class="a" style="left:1000.5px;top:188px;" width="7" height="7" viewBox="0 0 7 7"><path d="M0.8 0.8l5.4 5.4M6.2 0.8l-5.4 5.4" stroke="#707070" stroke-width="1.1"/></svg>
<svg class="a" style="left:287.7px;top:220.2px;" width="700" height="20" viewBox="0 0 700 20"><rect x="0.5" y="0.5" width="699" height="19" rx="3" fill="#fff" stroke="#d8d8d8"/><path d="M3.5 0.5H121.3L127.3 10 121.3 19.5H3.5a3 3 0 0 1-3-3V3.5a3 3 0 0 1 3-3z" fill="#c6f5c6" stroke="#d0e8d0"/><path d="M121.6 0.5L127.3 10 121.6 19.5" fill="none" stroke="#d4d4d4" stroke-width="1"/><path d="M238.3 0.5L242.3 10 238.3 19.5" fill="none" stroke="#d4d4d4" stroke-width="1"/><path d="M349.0 0.5L353.6 10 349.0 19.5" fill="none" stroke="#d4d4d4" stroke-width="1"/><path d="M443.8 0.5L449.3 10 443.8 19.5" fill="none" stroke="#d4d4d4" stroke-width="1"/><path d="M507.3 0.5L513.3 10 507.3 19.5" fill="none" stroke="#d4d4d4" stroke-width="1"/><path d="M643.6 0.5L649.8 10 643.6 19.5" fill="none" stroke="#d4d4d4" stroke-width="1"/></svg>
<div class="a t" style="left:297.59999999999997px;top:225.69px;font-size:8.6px;line-height:8.6px;color:#555555;transform:scaleX(0.9853);transform-origin:0 0;">Создание резервной копии</div>
<div class="a t" style="left:431.3px;top:225.69px;font-size:8.6px;line-height:8.6px;color:#555555;transform:scaleX(1.0023);transform-origin:0 0;">Настройка свертки</div>
<div class="a t" style="left:535.4000000000001px;top:225.69px;font-size:8.6px;line-height:8.6px;color:#555555;transform:scaleX(0.9879);transform-origin:0 0;">Формирование остатков</div>
<div class="a t" style="left:646.1px;top:225.69px;font-size:8.6px;line-height:8.6px;color:#555555;transform:scaleX(0.9633);transform-origin:0 0;">Просмотр операций</div>
<div class="a t" style="left:744.3000000000001px;top:225.69px;font-size:8.6px;line-height:8.6px;color:#555555;transform:scaleX(0.9818);transform-origin:0 0;">Проверка</div>
<div class="a t" style="left:805.2px;top:225.69px;font-size:8.6px;line-height:8.6px;color:#555555;transform:scaleX(1.0015);transform-origin:0 0;">Удаление старых документов</div>
<div class="a t" style="left:944.7px;top:225.69px;font-size:8.6px;line-height:8.6px;color:#555555;transform:scaleX(1.0359);transform-origin:0 0;">Готово</div>
<div class="a" style="left:288px;top:249.5px;width:12px;height:11px;background:#fff;border:1px solid #a8a8a8;border-radius:2px;"></div>
<svg class="a" style="left:289px;top:246px;" width="13" height="13" viewBox="0 0 13 13"><path d="M2 7.2l2.8 3.3L10.8 1.2" fill="none" stroke="#1f9e3e" stroke-width="2"/></svg>
<div class="a t" style="left:304px;top:249.16px;font-size:10.4px;line-height:10.4px;color:#4a4a4a;transform:scaleX(0.9667);transform-origin:0 0;">Создать резервную копию</div>
<div class="a" style="left:284.7px;top:262.2px;width:82px;height:2.2px;background:#e2640e;"></div>
<div class="a t" style="left:287.4px;top:267.61px;font-size:13.4px;line-height:13.4px;color:#2aa05a;transform:scaleX(0.9000);transform-origin:0 0;">Пароль администратора для входа в программу</div>
<div class="a t" style="left:287.8px;top:290.10px;font-size:10px;line-height:10px;color:#4a4a4a;letter-spacing:-0.1px;">Администратор:</div>
<div class="a" style="left:424.8px;top:282px;width:127.7px;height:23.2px;background:#fff;border:2px solid #f6c335;"></div>
<div class="a" style="left:427px;top:284px;width:58px;height:19px;background:#fffef5;"></div>
<div class="a t" style="left:431.3px;top:288.90px;font-size:10px;line-height:10px;color:#202020;letter-spacing:-0.14px;">Иванов ИО</div>
<div class="a t" style="left:287.8px;top:316.40px;font-size:10px;line-height:10px;color:#4a4a4a;">Пароль:</div>
<div class="a" style="left:426.9px;top:310.2px;width:123.3px;height:19.2px;background:#fff;border:1px solid #b4b4b4;border-radius:3px;"></div>
<div class="a t" style="left:287.8px;top:342.10px;font-size:10px;line-height:10px;color:#4a4a4a;letter-spacing:-0.07px;">Каталог резервной копии ИБ:</div>
<div class="a" style="left:426.9px;top:336.4px;width:314.4px;height:19px;background:#fff;border:1px solid #b4b4b4;border-radius:3px;"></div>
<div class="a" style="left:725.5px;top:337.4px;width:1px;height:17px;background:#b4b4b4;"></div>
<div class="a" style="left:429.5px;top:340px;width:140px;height:14px;background:#fffff0;"></div>
<div class="a" style="left:586px;top:340px;width:60px;height:14px;background:#fffdf0;"></div>
<div class="a t" style="left:429.4px;top:342.10px;font-size:10px;line-height:10px;color:#202020;">C:\Users\Documents\Архивы 1С</div>
<div class="a t" style="left:729.5px;top:343.20px;font-size:8px;line-height:8px;color:#444;">...</div>
<div class="a" style="left:940.5px;top:521.2px;width:61.5px;height:19.2px;background:linear-gradient(#fff200,#f2d500);border:1px solid #b8a830;border-radius:2px;"></div>
<div class="a t" style="left:950.8px;top:526.90px;font-size:10px;line-height:10px;color:#3a3a20;font-weight:bold;transform:scaleX(1.0477);transform-origin:0 0;">Далее &gt;</div>
<svg class="a" style="left:924px;top:516px;" width="91" height="31" viewBox="0 0 91 31"><rect x="2.4" y="2" width="85.8" height="26.7" rx="20" ry="13.35" fill="none" stroke="#e67a22" stroke-width="1.8"/></svg>
<div class="a" style="left:566px;top:492px;width:325px;height:108px;background:linear-gradient(90deg,#a8a8a8,#c8c8c8 1.5px,#c4c4c4 3px,#c0c0c0 calc(100% - 4px),#9a9a9a);border-top:1px solid #9a9a9a;"></div>
<div class="a" style="left:567px;top:493px;width:322px;height:17.5px;background:linear-gradient(#e2e3e5,#c4c6c8);border-radius:0 3px 0 0;"></div>
<div class="a t" style="left:572px;top:498.89px;font-size:8.6px;line-height:8.6px;color:#303030;transform:scaleX(0.9571);transform-origin:0 0;">1С:Предприятие</div>
<svg class="a" style="left:875.5px;top:499px;" width="7" height="7" viewBox="0 0 7 7"><path d="M0.7 0.7l5.6 5.6M6.3 0.7l-5.6 5.6" stroke="#888" stroke-width="1.3"/></svg>
<div class="a" style="left:569.5px;top:510.5px;width:317px;height:84px;background:#fff;"></div>
<div class="a" style="left:566px;top:594.5px;width:325px;height:5.5px;background:linear-gradient(#cfcfcf,#b4b4b4);border-bottom:1px solid #8c8c8c;"></div>
<div class="a t" style="left:577.4px;top:524.90px;font-size:10px;line-height:10px;color:#303030;letter-spacing:0.005px;">Для создания резервной копии программа будет перезапущена.</div>
<div class="a t" style="left:577.4px;top:537.50px;font-size:10px;line-height:10px;color:#303030;">Создать резервную копию?</div>
<div class="a" style="left:641.6px;top:561.2px;width:82.2px;height:20px;background:linear-gradient(#fafafa,#e4e4e4);border:1px solid #a8a8a8;border-radius:2px;"></div>
<div class="a" style="left:642.6px;top:562.2px;width:80.2px;height:18px;border:1px dotted #7a7a7a;"></div>
<div class="a t" style="left:676.8px;top:566.50px;font-size:10px;line-height:10px;color:#404040;">Да</div>
<div class="a" style="left:729.6px;top:561px;width:83px;height:20.6px;background:linear-gradient(#fafafa,#e4e4e4);border:1px solid #b4b4b4;border-radius:2px;"></div>
<div class="a t" style="left:762.6px;top:567.10px;font-size:10px;line-height:10px;color:#404040;">Нет</div>
<div class="a" style="left:641.6px;top:584.3px;width:82.2px;height:2.2px;background:#e2640e;"></div>
<svg class="a" style="left:700px;top:520px;" width="240" height="50" viewBox="0 0 240 50"><path d="M226.4 11L22.6 36.6" stroke="#e67a22" stroke-width="1.5" fill="none"/><path d="M29 32.8L22.4 36.6 29.3 39" stroke="#e67a22" stroke-width="1.5" fill="none"/></svg>
</body></html>
